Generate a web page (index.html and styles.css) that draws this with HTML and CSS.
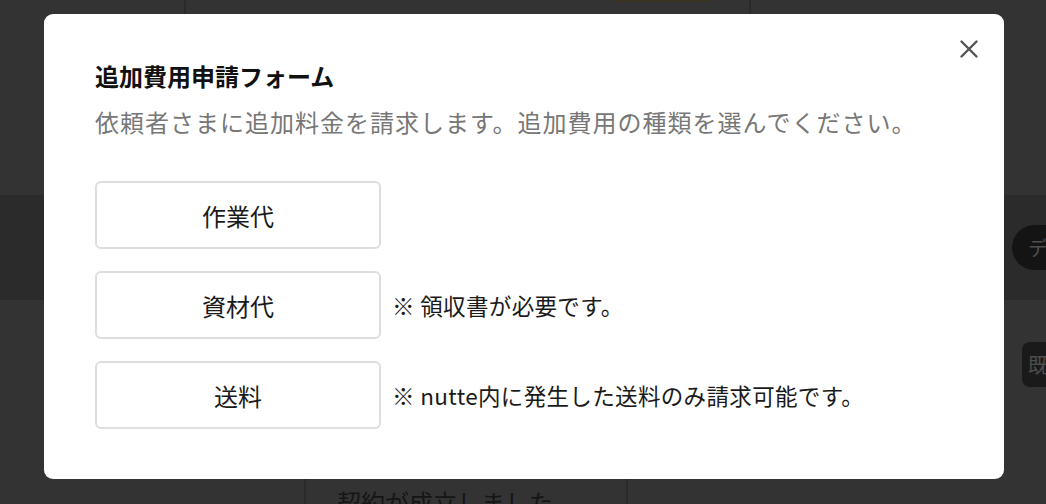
FILE: index.html
```html
<!DOCTYPE html>
<html lang="ja">
<head>
<meta charset="utf-8">
<title>追加費用申請フォーム</title>
<link rel="stylesheet" href="styles.css">
</head>
<body>
  <div class="page">
    <div class="page-top">
      <div class="panel">
        <div class="panel-action"></div>
      </div>
    </div>
    <div class="page-band">
      <span class="chip">デ</span>
    </div>
    <div class="page-mid">
      <span class="tag">既</span>
    </div>
    <div class="page-bottom">
      <div class="message">契約が成立しました</div>
    </div>
  </div>

  <div class="modal" role="dialog" aria-labelledby="modal-title">
    <button class="modal-close" aria-label="閉じる">
      <svg width="18" height="18" viewBox="0 0 18 18" aria-hidden="true">
        <path d="M1.5 1.5 L16.5 16.5 M16.5 1.5 L1.5 16.5" stroke="#555" stroke-width="2.4" stroke-linecap="round" fill="none"/>
      </svg>
    </button>
    <h2 class="modal-title" id="modal-title">追加費用申請フォーム</h2>
    <p class="modal-lead">依頼者さまに追加料金を請求します。追加費用の種類を選んでください。</p>
    <ul class="cost-list">
      <li class="cost-row">
        <button class="cost-btn">作業代</button>
      </li>
      <li class="cost-row">
        <button class="cost-btn">資材代</button>
        <span class="cost-note">※ 領収書が必要です。</span>
      </li>
      <li class="cost-row">
        <button class="cost-btn">送料</button>
        <span class="cost-note">※ nutte内に発生した送料のみ請求可能です。</span>
      </li>
    </ul>
  </div>
</body>
</html>
```

FILE: styles.css
```css
* {
  box-sizing: border-box;
}

html, body {
  margin: 0;
  padding: 0;
  height: 100%;
}

body {
  background: #333333;
  font-family: "Noto Sans CJK JP", "Noto Sans", sans-serif;
  overflow: hidden;
}

/* dimmed page behind the dialog */
.page {
  display: flex;
  flex-direction: column;
  height: 504px;
  overflow: hidden;
}

.page-top,
.page-band,
.page-mid {
  flex-shrink: 0;
}

.page-top {
  height: 195px;
  display: flex;
}

.panel {
  margin-left: 184px;
  width: 567px;
  height: 100%;
  border-left: 2px solid #2a2a2a;
  border-right: 2px solid #2a2a2a;
}

.panel-action {
  margin-left: 429px;
  width: 94px;
  height: 2px;
  background: #3a3420;
}

.page-band {
  height: 105px;
  background: #2b2b2b;
  display: flex;
  align-items: center;
  padding-left: 1012px;
}

.chip {
  flex-shrink: 0;
  height: 45px;
  width: 60px;
  padding-left: 16px;
  border-radius: 23px;
  background: #151414;
  color: #4e4e4e;
  font-size: 20px;
  line-height: 45px;
}

.page-mid {
  height: 179px;
  display: flex;
  align-items: flex-start;
  padding-top: 42px;
  padding-left: 1022px;
}

.tag {
  flex-shrink: 0;
  height: 45px;
  width: 50px;
  padding-left: 6px;
  border-radius: 8px;
  background: #1a1a1a;
  color: #4e4e4e;
  font-size: 20px;
  line-height: 45px;
}

.page-bottom {
  flex: 1;
  display: flex;
  min-height: 0;
}

.message {
  margin-left: 304px;
  width: 324px;
  border-left: 2px solid #2a2a2a;
  border-right: 2px solid #2a2a2a;
  padding: 5px 0 0 31px;
  color: #151515;
  font-size: 24px;
  line-height: 36px;
  white-space: nowrap;
  overflow: hidden;
}

/* dialog */
.modal {
  position: fixed;
  left: 44px;
  top: 14px;
  width: 960px;
  height: 465px;
  background: #ffffff;
  border-radius: 9px;
  padding: 44px 50px 0 51px;
}

.modal-close {
  position: absolute;
  top: 26px;
  right: 26px;
  width: 18px;
  height: 18px;
  padding: 0;
  margin: 0;
  border: 0;
  background: none;
  display: block;
}

.modal-close svg {
  display: block;
}

.modal-title {
  margin: 0;
  font-size: 24px;
  line-height: 36px;
  font-weight: 700;
  color: #111111;
}

.modal-lead {
  margin: 10px 0 0;
  font-size: 24px;
  line-height: 36px;
  color: #777777;
  letter-spacing: 1px;
}

.cost-list {
  list-style: none;
  margin: 41px 0 0;
  padding: 0;
  display: flex;
  flex-direction: column;
  gap: 22px;
}

.cost-row {
  display: flex;
  align-items: center;
  gap: 11px;
}

.cost-btn {
  width: 286px;
  height: 68px;
  border: 2px solid #dedede;
  border-radius: 6px;
  background: #ffffff;
  font-family: inherit;
  font-size: 24px;
  color: #1a1a1a;
  padding: 0;
}

.cost-note {
  font-size: 22.5px;
  line-height: 32px;
  letter-spacing: 0.35px;
  color: #1a1a1a;
}
```
